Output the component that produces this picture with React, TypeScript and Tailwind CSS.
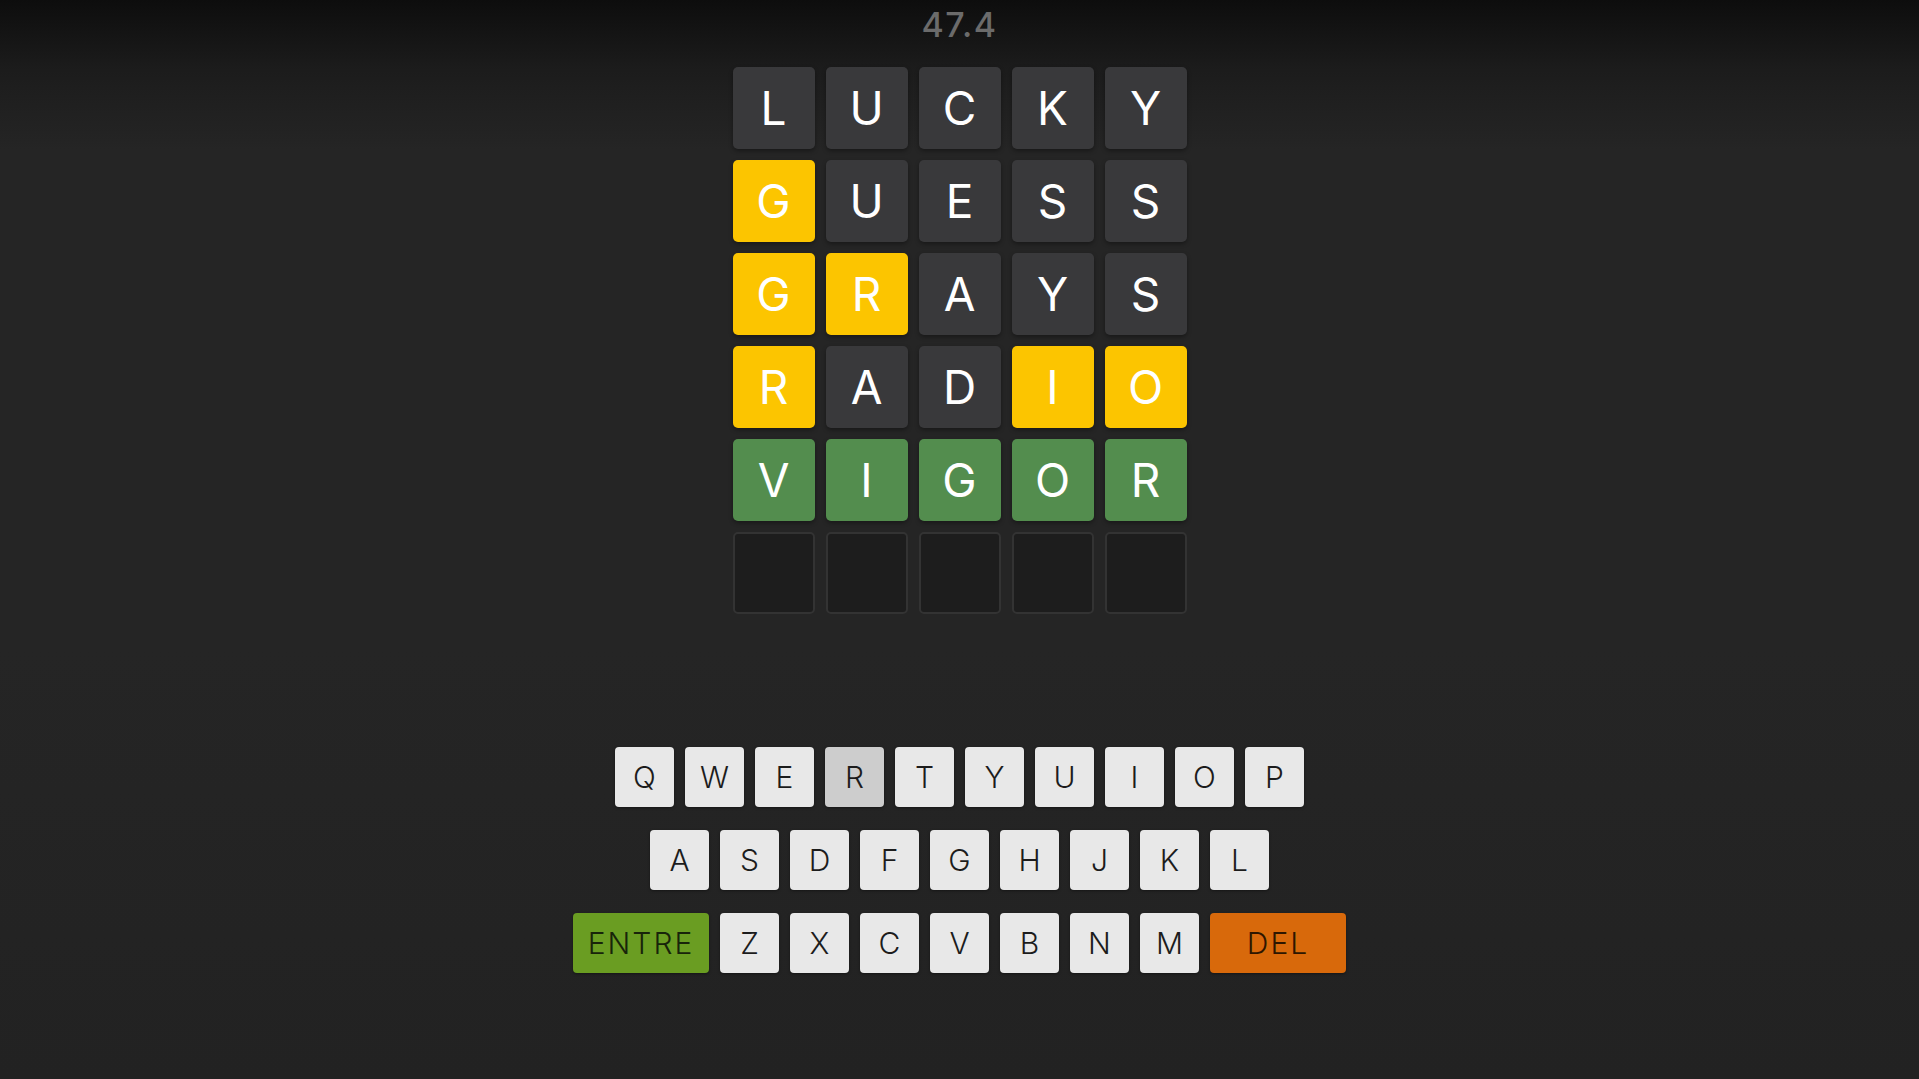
import React from "react";

type S = "d" | "y" | "g" | "e";
const rows: { l: string; s: S }[][] = [
  "LUCKY".split("").map((l) => ({ l, s: "d" as S })),
  [
    { l: "G", s: "y" },
    { l: "U", s: "d" },
    { l: "E", s: "d" },
    { l: "S", s: "d" },
    { l: "S", s: "d" },
  ],
  [
    { l: "G", s: "y" },
    { l: "R", s: "y" },
    { l: "A", s: "d" },
    { l: "Y", s: "d" },
    { l: "S", s: "d" },
  ],
  [
    { l: "R", s: "y" },
    { l: "A", s: "d" },
    { l: "D", s: "d" },
    { l: "I", s: "y" },
    { l: "O", s: "y" },
  ],
  "VIGOR".split("").map((l) => ({ l, s: "g" as S })),
  [0, 1, 2, 3, 4].map(() => ({ l: "", s: "e" as S })),
];

const tileCls: Record<S, string> = {
  d: "bg-[#39393b] shadow-[0_2px_4px_rgba(0,0,0,0.35)]",
  y: "bg-[#fcc500] shadow-[0_2px_4px_rgba(0,0,0,0.35)]",
  g: "bg-[#538d4e] shadow-[0_2px_4px_rgba(0,0,0,0.35)]",
  e: "bg-[#1d1d1d] border-2 border-[#333333]",
};

function Key({ k, wide, cls }: { k: string; wide?: boolean; cls?: string }) {
  return (
    <div
      className={`${wide ? "w-[136px] tracking-[2px]" : "w-[59px]"} h-[60px] rounded-[4px] flex items-center justify-center text-[30px] font-light shadow-[0_1px_3px_rgba(0,0,0,0.4)] ${
        cls ?? "bg-[#e8e8e8] text-[#1c1c1c]"
      }`}
    >
      {k}
    </div>
  );
}

export default function App() {
  const r1 = "QWERTYUIOP".split("");
  const r2 = "ASDFGHJKL".split("");
  const r3 = "ZXCVBNM".split("");
  return (
    <div
      className="w-full h-[1079px] overflow-hidden flex flex-col items-center bg-[linear-gradient(to_bottom,#0d0d0d_0px,#1c1c1c_70px,#252525_150px,#252525_60%,#222222_100%)]"
      style={{ fontFamily: "Inter, 'Noto Sans', sans-serif" }}
    >
      <div className="mt-[5px] h-[40px] text-[34px] leading-[40px] font-medium text-[#6b6b6b] tracking-[1.5px]">
        47.4
      </div>
      <div className="mt-[22px] flex flex-col gap-[11px]">
        {rows.map((row, i) => (
          <div key={i} className="flex gap-[11px]">
            {row.map((t, j) => (
              <div
                key={j}
                className={`w-[82px] h-[82px] rounded-[5px] flex items-center justify-center text-[46px] font-normal text-white ${tileCls[t.s]}`}
              >
                {t.l}
              </div>
            ))}
          </div>
        ))}
      </div>
      <div className="mt-[133px] flex flex-col items-center gap-[23px]">
        <div className="flex gap-[11px]">
          {r1.map((k) => (
            <Key key={k} k={k} cls={k === "R" ? "bg-[#cdcdcd] text-[#1c1c1c]" : undefined} />
          ))}
        </div>
        <div className="flex gap-[11px]">
          {r2.map((k) => (
            <Key key={k} k={k} />
          ))}
        </div>
        <div className="flex gap-[11px]">
          <Key k="ENTRE" wide cls="bg-[#6a9d22] text-[#18240a]" />
          {r3.map((k) => (
            <Key key={k} k={k} />
          ))}
          <Key k="DEL" wide cls="bg-[#d8690b] text-[#2e1600]" />
        </div>
      </div>
    </div>
  );
}
